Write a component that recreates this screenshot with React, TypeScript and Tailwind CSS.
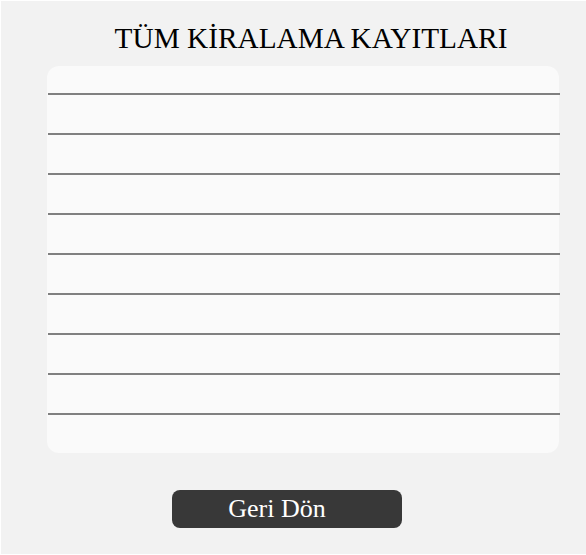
export default function App() {
  const rows = Array.from({ length: 9 }, (_, i) => i);

  return (
    <div className="bg-white pl-px pt-px pb-px h-[555px]" style={{ fontFamily: '"Liberation Serif", "Times New Roman", serif' }}>
      <div className="bg-[#f2f2f2] h-[553px] pt-[21px]">
        <h1 className="pl-[35px] text-center text-[29.3px] leading-[33px] text-black font-normal">
          TÜM KİRALAMA KAYITLARI
        </h1>
        <div className="mt-[11px] ml-[46px] w-[512px] bg-[#fafafa] rounded-[12px]">
          <div className="h-[27px]" />
          {rows.map((r) => (
            <div key={r} className="h-[40px] ml-px w-[512px] border-t-2 border-[#808080]" />
          ))}
        </div>
        <button className="mt-[37px] ml-[171px] w-[230px] h-[38px] rounded-[8px] bg-[#383838] text-white text-[26px] leading-[30px] pr-[20px] text-center">
          Geri Dön
        </button>
      </div>
    </div>
  );
}
